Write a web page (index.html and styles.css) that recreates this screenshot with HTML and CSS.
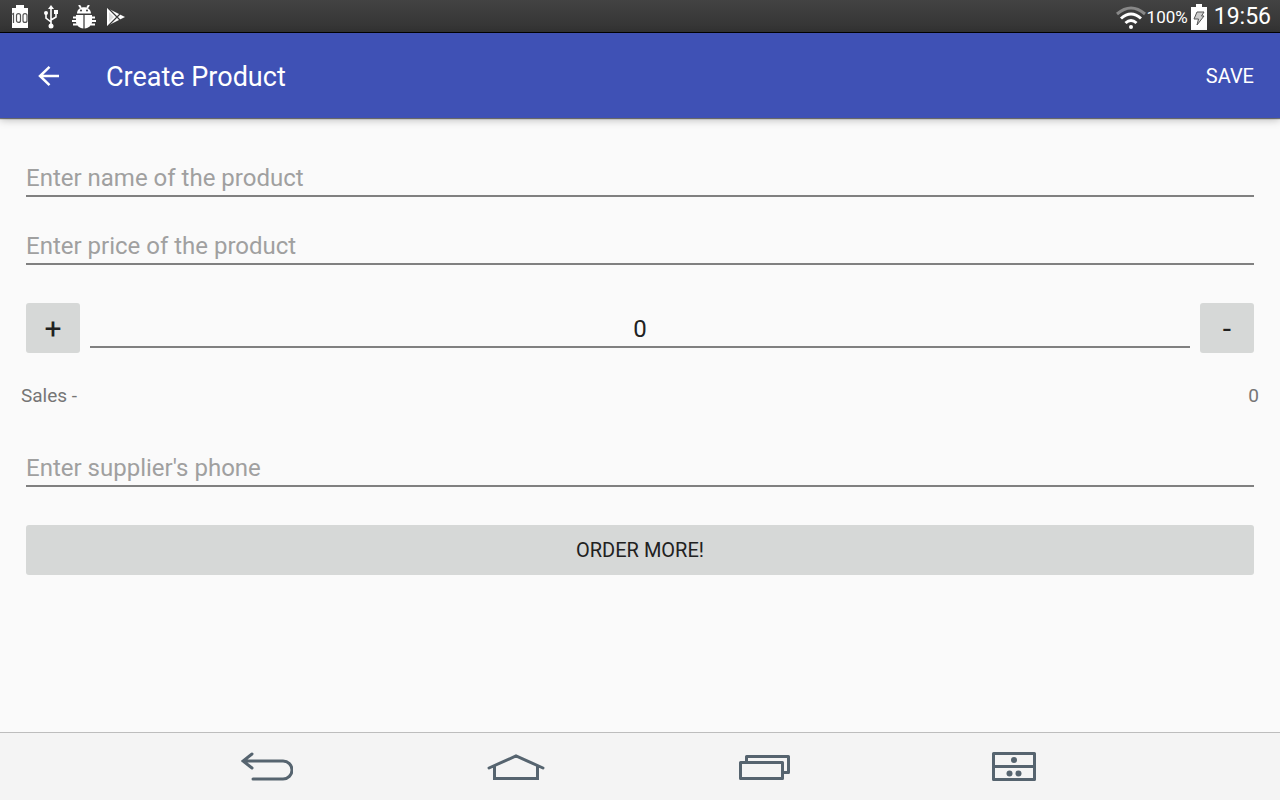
FILE: index.html
```html
<!DOCTYPE html>
<html lang="en">
<head>
<meta charset="utf-8">
<meta name="viewport" content="width=device-width, initial-scale=1">
<title>Create Product</title>
<link rel="stylesheet" href="styles.css">
</head>
<body>
<div class="status-bar">
  <div class="status-icons">
    <svg width="20" height="24" viewBox="-1 0 20 24" aria-hidden="true">
      <path d="M5 0h8v3h4v20H1V3h4z" fill="#fff"/>
      <g fill="none" stroke="#555" stroke-width="1.200"><path d="M0.500 9.500l2-1V18"/><rect x="5.500" y="8.600" width="4" height="8.800" rx="2"/><rect x="12" y="8.600" width="4" height="8.800" rx="2"/></g>
    </svg>
    <svg width="20" height="24" viewBox="-3 0 20 24" aria-hidden="true">
      <g fill="none" stroke="#fff" stroke-width="1.600"><path d="M7 3v18M2 8v5l5 4M12 7v5l-5 3"/></g>
      <g fill="#fff"><path d="M7 0l3 4H4z"/><circle cx="7" cy="21" r="2.500"/><circle cx="2" cy="8" r="2"/><path d="M10 5h4v4h-4z"/></g>
    </svg>
    <svg width="24" height="24" viewBox="0 0 24 24" aria-hidden="true">
      <g stroke="#fff" stroke-width="2" fill="none"><path d="M7 0l2 3M17 0l-2 3M5 12.500H1M5 16H0M5 19.500H1M19 12.500h4M19 16h5M19 19.500h4"/></g>
      <path d="M5 8.500c0-8.500 14-8.500 14 0zM4 10h7.400v13.500C7 23 4 20 4 17zM12.600 10H20v7c0 3-3 6-7.400 6.500z" fill="#fff"/>
      <circle cx="9" cy="5.500" r="1" fill="#3a3a3a"/><circle cx="15" cy="5.500" r="1" fill="#3a3a3a"/>
    </svg>
    <svg width="18" height="20" viewBox="0 0 18 20" aria-hidden="true">
      <path d="M0 1l18 9L0 19z" fill="#fff"/>
      <path d="M1 1l12 12M1 19L13 7" stroke="#3a3a3a" stroke-width="1.200"/>
      <path d="M2 5l5 5-5 5z" fill="#ddd"/>
    </svg>
  </div>
  <div class="status-info">
    <svg width="30" height="24" viewBox="0 0 30 24" aria-hidden="true">
      <g fill="none" stroke="#fff" stroke-width="3"><path d="M1 9Q15-3 29 9" stroke="#888"/><path d="M5 13.500q10-9 20 0M9.500 18q5.500-5 11 0"/></g>
      <circle cx="15" cy="22" r="2" fill="#fff"/>
    </svg>
    <span class="battery-level">100%</span>
    <svg width="16" height="26" viewBox="0 0 16 26" aria-hidden="true">
      <path d="M5 0h6v3h5v23H0V3h5z" fill="#fff"/>
      <path d="M6 8h7l-2.500 4H13l-7 9 1.500-6H3z" fill="#ccc" stroke="#555"/>
    </svg>
    <time class="clock">19:56</time>
  </div>
</div>
<header class="app-bar">
  <button class="back" type="button" aria-label="Navigate up">
    <svg width="22" height="22" viewBox="0 0 22 22" aria-hidden="true"><path d="M21 11H2.500M11.500 1.800L2 11l9.500 9.200" fill="none" stroke="#fff" stroke-width="2.500"/></svg>
  </button>
  <h1 class="title">Create Product</h1>
  <button class="save" type="submit" form="product-form">SAVE</button>
</header>
<main class="content">
  <form class="form" id="product-form">
    <input class="field" type="text" aria-label="Name" placeholder="Enter name of the product">
    <input class="field field-price" type="text" aria-label="Price" placeholder="Enter price of the product">
    <div class="quantity">
      <button class="button step" type="button" aria-label="Increase quantity">+</button>
      <input class="field field-quantity" type="text" aria-label="Quantity" value="0">
      <button class="button step" type="button" aria-label="Decrease quantity">-</button>
    </div>
    <div class="sales"><span>Sales -</span><span>0</span></div>
    <input class="field" type="tel" aria-label="Supplier's phone" placeholder="Enter supplier's phone">
    <button class="button order" type="button">ORDER MORE!</button>
  </form>
</main>
<nav class="nav-bar" aria-label="System">
  <button class="nav-button" type="button" aria-label="Back">
    <svg width="52" height="30" viewBox="0 0 52 30" aria-hidden="true"><path d="M11 2L2 9l9 7M2 9h40a9 9 0 0 1 0 18H12" fill="none" stroke="#56646f" stroke-width="3" stroke-linecap="round"/></svg>
  </button>
  <button class="nav-button" type="button" aria-label="Home">
    <svg width="58" height="30" viewBox="0 0 58 30" aria-hidden="true"><path d="M2 16L29 4l27 12M7.500 14v12.500h43V14" fill="none" stroke="#56646f" stroke-width="3" stroke-linecap="round"/></svg>
  </button>
  <button class="nav-button" type="button" aria-label="Recent apps">
    <svg width="52" height="30" viewBox="0 0 52 30" aria-hidden="true"><path d="M7.500 10V4.500h42v16H44M1.500 10.500h42v16h-42z" fill="none" stroke="#56646f" stroke-width="3" stroke-linejoin="round"/></svg>
  </button>
  <button class="nav-button" type="button" aria-label="Dual window">
    <svg width="44" height="30" viewBox="0 0 44 30" aria-hidden="true"><path d="M1.500 1.500h41v26h-41zM1.500 14.500h41" fill="none" stroke="#56646f" stroke-width="3" stroke-linejoin="round"/><g fill="#56646f"><circle cx="22" cy="8" r="3"/><circle cx="17.500" cy="21.500" r="3"/><circle cx="26.500" cy="21.500" r="3"/></g></svg>
  </button>
</nav>
</body>
</html>
```
FILE: styles.css
```css
* {
  box-sizing: border-box;
}

body {
  display: flex;
  flex-direction: column;
  min-height: 100vh;
  margin: 0;
  background: #fafafa;
  color: #212121;
  font-family: Roboto, "Noto Sans", sans-serif;
}

button {
  padding: 0;
  border: 0;
  background: none;
  color: inherit;
  font-family: inherit;
}

svg {
  display: block;
}

.status-bar {
  display: flex;
  justify-content: space-between;
  height: 33px;
  padding: 1px 9px 0 10px;
  border-bottom: 1px solid #000;
  background: linear-gradient(#434343, #333);
  color: #fff;
}

.status-icons,
.status-info {
  display: flex;
  align-items: center;
}

.status-icons {
  gap: 11px;
}

.battery-level {
  margin: 0 3px 0 1px;
  font-size: 17px;
}

.clock {
  margin-left: 7px;
  font-size: 23px;
}

.app-bar {
  z-index: 1;
  display: flex;
  align-items: center;
  height: 85px;
  padding: 0 26px 0 38px;
  background: #3f51b5;
  box-shadow: 0 1px 1px rgba(0, 0, 0, 0.5), 0 2px 8px rgba(0, 0, 0, 0.25);
  color: #fff;
}

.title {
  flex: 1;
  margin: 2px 0 0 46px;
  font-size: 27px;
  font-weight: 400;
  line-height: 32px;
}

.save {
  font-size: 20px;
}

.content {
  flex: 1;
  padding: 39px 26px;
}

.form {
  display: flex;
  flex-direction: column;
}

.field {
  width: 100%;
  height: 40px;
  padding: 4px 0 0;
  border: 0;
  border-bottom: 2px solid #808080;
  border-radius: 0;
  outline: 0;
  background: transparent;
  color: #212121;
  font-family: inherit;
  font-size: 24px;
}

.field::placeholder {
  color: #a0a0a0;
  opacity: 1;
}

.field-price {
  margin-top: 28px;
}

.quantity {
  display: flex;
  gap: 10px;
  margin-top: 38px;
}

.field-quantity {
  flex: 1;
  min-width: 0;
  height: 45px;
  padding-top: 9px;
  text-align: center;
}

.button {
  height: 50px;
  border-radius: 3px;
  background: #d6d8d7;
  font-size: 20px;
}

.step {
  width: 54px;
  font-size: 30px;
}

.sales {
  display: flex;
  justify-content: space-between;
  margin: 32px -5px 40px;
  color: #757575;
  font-size: 19px;
  line-height: 22px;
}

.order {
  margin-top: 38px;
}

.nav-bar {
  display: flex;
  justify-content: center;
  height: 68px;
  border-top: 1px solid #bdbdbd;
  background: #f4f4f4;
}

.nav-button {
  display: flex;
  align-items: center;
  justify-content: center;
  width: 249px;
}
```
